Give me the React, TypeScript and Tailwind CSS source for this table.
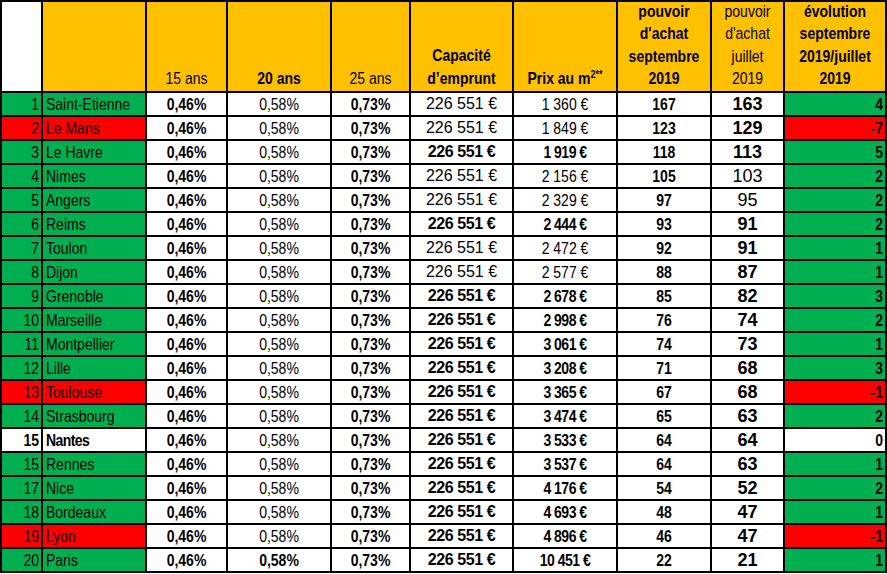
import React from "react";

type Row = {
  rank: string;
  city: string;
  c: "g" | "r" | "w";
  bold: boolean;
  prix: string;
  sept: string;
  jul: string;
  julBold: boolean;
  evo: string;
  e: "g" | "r" | "w";
  p20Bold?: boolean;
};

const rows: Row[] = [
  { rank: "1", city: "Saint-Etienne", c: "g", bold: false, prix: "1 360 €", sept: "167", jul: "163", julBold: true, evo: "4", e: "g" },
  { rank: "2", city: "Le Mans", c: "r", bold: false, prix: "1 849 €", sept: "123", jul: "129", julBold: true, evo: "-7", e: "r" },
  { rank: "3", city: "Le Havre", c: "g", bold: true, prix: "1 919 €", sept: "118", jul: "113", julBold: true, evo: "5", e: "g" },
  { rank: "4", city: "Nimes", c: "g", bold: false, prix: "2 156 €", sept: "105", jul: "103", julBold: false, evo: "2", e: "g" },
  { rank: "5", city: "Angers", c: "g", bold: false, prix: "2 329 €", sept: "97", jul: "95", julBold: false, evo: "2", e: "g" },
  { rank: "6", city: "Reims", c: "g", bold: true, prix: "2 444 €", sept: "93", jul: "91", julBold: true, evo: "2", e: "g" },
  { rank: "7", city: "Toulon", c: "g", bold: false, prix: "2 472 €", sept: "92", jul: "91", julBold: true, evo: "1", e: "g" },
  { rank: "8", city: "Dijon", c: "g", bold: false, prix: "2 577 €", sept: "88", jul: "87", julBold: true, evo: "1", e: "g" },
  { rank: "9", city: "Grenoble", c: "g", bold: true, prix: "2 678 €", sept: "85", jul: "82", julBold: true, evo: "3", e: "g" },
  { rank: "10", city: "Marseille", c: "g", bold: true, prix: "2 998 €", sept: "76", jul: "74", julBold: true, evo: "2", e: "g" },
  { rank: "11", city: "Montpellier", c: "g", bold: true, prix: "3 061 €", sept: "74", jul: "73", julBold: true, evo: "1", e: "g" },
  { rank: "12", city: "Lille", c: "g", bold: true, prix: "3 208 €", sept: "71", jul: "68", julBold: true, evo: "3", e: "g" },
  { rank: "13", city: "Toulouse", c: "r", bold: true, prix: "3 365 €", sept: "67", jul: "68", julBold: true, evo: "-1", e: "r" },
  { rank: "14", city: "Strasbourg", c: "g", bold: true, prix: "3 474 €", sept: "65", jul: "63", julBold: true, evo: "2", e: "g" },
  { rank: "15", city: "Nantes", c: "w", bold: true, prix: "3 533 €", sept: "64", jul: "64", julBold: true, evo: "0", e: "w" },
  { rank: "15", city: "Rennes", c: "g", bold: true, prix: "3 537 €", sept: "64", jul: "63", julBold: true, evo: "1", e: "g" },
  { rank: "17", city: "Nice", c: "g", bold: true, prix: "4 176 €", sept: "54", jul: "52", julBold: true, evo: "2", e: "g" },
  { rank: "18", city: "Bordeaux", c: "g", bold: true, prix: "4 693 €", sept: "48", jul: "47", julBold: true, evo: "1", e: "g" },
  { rank: "19", city: "Lyon", c: "r", bold: true, prix: "4 896 €", sept: "46", jul: "47", julBold: true, evo: "-1", e: "r" },
  { rank: "20", city: "Paris", c: "g", bold: true, prix: "10 451 €", sept: "22", jul: "21", julBold: true, evo: "1", e: "g", p20Bold: true },
];

const bg = (c: "g" | "r" | "w") =>
  c === "g" ? "bg-[#00b050]" : c === "r" ? "bg-[#ff0000]" : "bg-white";

const S = ({ children, className = "" }: { children: React.ReactNode; className?: string }) => (
  <span className={"inline-block scale-y-[1.2] whitespace-nowrap " + className}>{children}</span>
);

function HeaderCell({ lines, bold, white }: { lines: React.ReactNode[]; bold?: boolean; white?: boolean }) {
  return (
    <div className={"h-[89px] flex flex-col justify-end items-center " + (white ? "bg-white" : "bg-[#ffc000]")}>
      <div className={"origin-bottom scale-y-[1.2] text-center text-[14px] leading-[18.8px] pb-[1px] " + (bold ? "font-bold" : "")}>
        {lines.map((l, i) => (
          <div key={i} className="whitespace-nowrap">{l}</div>
        ))}
      </div>
    </div>
  );
}

export default function App() {
  return (
    <div className="bg-white w-[887px] h-[574px] font-['Liberation_Sans',Arial,sans-serif] text-black">
      <div className="grid grid-cols-[39px_102px_79px_102px_77px_101px_102px_92px_71px_100px] gap-[2px] p-[2px] bg-black w-fit">
        <HeaderCell white lines={[]} />
        <HeaderCell lines={[]} />
        <HeaderCell lines={["15 ans"]} />
        <HeaderCell bold lines={["20 ans"]} />
        <HeaderCell lines={["25 ans"]} />
        <HeaderCell bold lines={["Capacité", "d’emprunt"]} />
        <HeaderCell
          bold
          lines={[
            <span>
              Prix au m<span className="text-[9px] align-[5px]">2**</span>
            </span>,
          ]}
        />
        <HeaderCell bold lines={["pouvoir", "d'achat", "septembre", "2019"]} />
        <HeaderCell lines={["pouvoir", "d'achat", "juillet", "2019"]} />
        <HeaderCell bold lines={["évolution", "septembre", "2019/juillet", "2019"]} />

        {rows.map((r, i) => (
          <React.Fragment key={i}>
            <div className={"h-[22px] flex items-center justify-end pr-[2px] text-[14px] " + bg(r.c) + (r.c === "w" ? " font-bold" : "")}>
              <S>{r.rank}</S>
            </div>
            <div className={"h-[22px] flex items-center pl-[3px] text-[14px] " + bg(r.c) + (r.c === "w" ? " font-bold tracking-[-0.6px]" : "")}>
              <S>{r.city}</S>
            </div>
            <div className="h-[22px] flex items-center justify-center bg-white text-[14px] font-bold">
              <S>0,46%</S>
            </div>
            <div className={"h-[22px] flex items-center justify-center bg-white text-[14px] " + (r.p20Bold ? "font-bold" : "")}>
              <S>0,58%</S>
            </div>
            <div className="h-[22px] flex items-center justify-center bg-white text-[14px] font-bold">
              <S>0,73%</S>
            </div>
            <div className={"h-[22px] flex items-center justify-center bg-white text-[16px] " + (r.bold ? "font-bold tracking-[-0.4px]" : "")}>
              <S className="scale-y-[1.05]">{r.cap ?? "226 551 €"}</S>
            </div>
            <div className={"h-[22px] flex items-center justify-center bg-white text-[14px] " + (r.bold ? "font-bold tracking-[-0.5px]" : "")}>
              <S>{r.prix}</S>
            </div>
            <div className="h-[22px] flex items-center justify-center bg-white text-[14px] font-bold">
              <S>{r.sept}</S>
            </div>
            <div className={"h-[22px] flex items-center justify-center bg-white text-[18px] leading-[22px] " + (r.julBold ? "font-bold" : "")}>
              <span className="whitespace-nowrap">{r.jul}</span>
            </div>
            <div className={"h-[22px] flex items-center justify-end pr-[2px] text-[14px] font-bold " + bg(r.e)}>
              <S>{r.evo}</S>
            </div>
          </React.Fragment>
        ))}
      </div>
    </div>
  );
}
